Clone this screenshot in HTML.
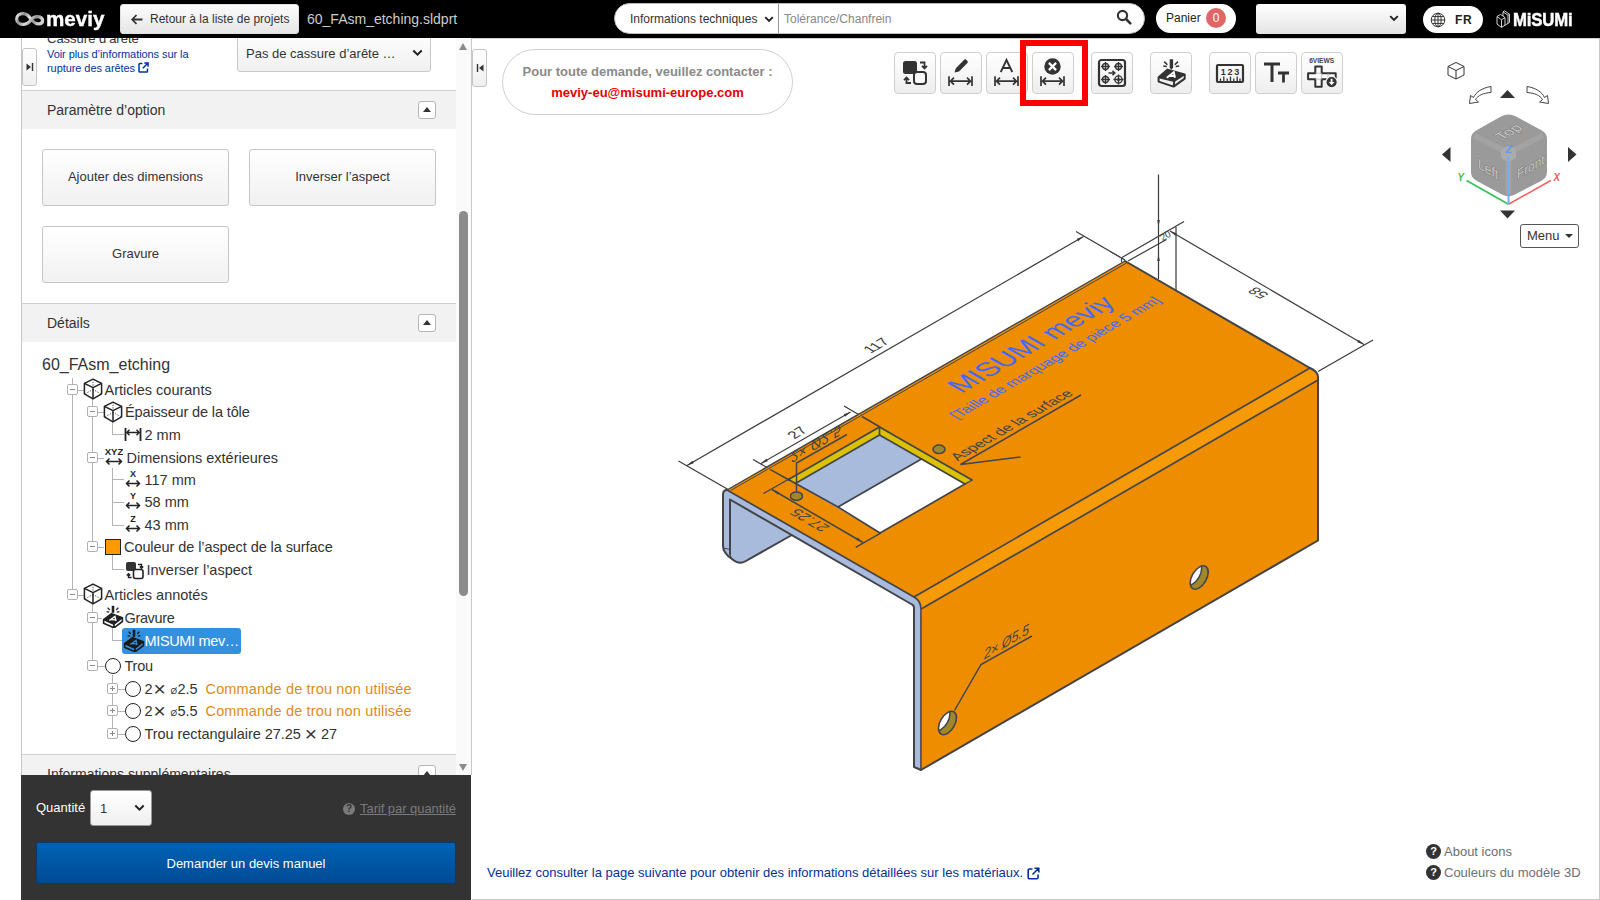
<!DOCTYPE html>
<html lang="fr">
<head>
<meta charset="utf-8">
<title>meviy</title>
<style>
*{box-sizing:border-box;margin:0;padding:0}
html,body{width:1600px;height:900px;overflow:hidden;background:#fff;font-family:"Liberation Sans",sans-serif;color:#333}
.abs{position:absolute}
#hdr{position:absolute;left:0;top:0;width:1600px;height:38px;background:#000}
.btn{position:absolute;border:1px solid #c4c4c4;border-radius:3px;background:linear-gradient(#ffffff,#efefef);color:#333;text-align:center}
#lp{position:absolute;left:21px;top:38px;width:451px;height:737px;border-left:1px solid #c8c8c8;border-right:1px solid #c8c8c8;background:#fff;overflow:hidden}
.sech{position:absolute;left:0;width:434px;height:39px;background:#f2f2f2;border-top:1px solid #d0d0d0;font-size:14px;color:#333}
.sech span{position:absolute;left:25px;top:11px}
.colb{position:absolute;left:396px;width:18px;height:18px;border:1px solid #b5b5b5;border-radius:3px;background:#fff}
.colb:after{content:"";position:absolute;left:4px;top:5px;border-left:4px solid transparent;border-right:4px solid transparent;border-bottom:5px solid #333}
.tree{font-size:15.5px;color:#333;white-space:nowrap;letter-spacing:-0.1px}
.tree div{position:absolute;height:20px;line-height:20px}
#bot{position:absolute;left:21px;top:775px;width:450px;height:125px;background:#333}
#vw{position:absolute;left:472px;top:38px;width:1128px;height:862px;border-right:1px solid #c8c8c8;border-bottom:1px solid #c8c8c8;background:#fff}
.tb{position:absolute;top:52px;width:42px;height:42px;border:1px solid #cfcfcf;border-radius:4px;background:linear-gradient(#ffffff,#eeeeee)}
</style>
</head>
<body>
<!-- HEADER -->
<div id="hdr">
<svg class="abs" style="left:14px;top:10px" width="32" height="18" viewBox="0 0 32 18"><defs><linearGradient id="lg1" x1="0" y1="0" x2="1" y2="0.300"><stop offset="0" stop-color="#f6f6f6"/><stop offset="0.280" stop-color="#8c8c8c"/><stop offset="0.550" stop-color="#dcdcdc"/><stop offset="0.800" stop-color="#909090"/><stop offset="1" stop-color="#cfcfcf"/></linearGradient></defs><path d="M17.500 10.200C15 5.500 12 3.600 9 3.600 5.300 3.600 2.700 6 2.700 9 2.700 12 5.300 14.300 9 14.300 12.500 14.300 15.300 12.300 17.300 9.700 19 7.500 21.200 6.400 23.800 6.600 26.800 6.900 28.600 8.600 28.600 10.600 28.600 12.600 27 13.900 24.600 13.900 22.300 13.900 20.600 12.900 19.300 11.500" fill="none" stroke="url(#lg1)" stroke-width="3.300" stroke-linecap="round"/></svg>
<div class="abs" style="left:46px;top:6px;font-size:20px;font-weight:bold;color:#fff;line-height:26px;transform-origin:0 0;transform:scaleX(1.030);-webkit-text-stroke:0.4px #fff">meviy</div>
<div class="btn" style="left:120px;top:4px;width:179px;height:30px;border-color:#e0e0e0;background:linear-gradient(#fcfcfc,#e6e6e6)">
<svg class="abs" style="left:10px;top:9px" width="12" height="11" viewBox="0 0 12 11"><path d="M5.500 1L1.200 5.500 5.500 10M1.500 5.500H11.500" fill="none" stroke="#333" stroke-width="1.800"/></svg>
<div class="abs" style="left:29px;top:7px;font-size:12px;line-height:14px;white-space:nowrap;color:#333">Retour à la liste de projets</div></div>
<div class="abs" style="left:307px;top:11px;font-size:14px;line-height:16px;color:#ccc;white-space:nowrap">60_FAsm_etching.sldprt</div>
<div class="abs" style="left:614px;top:3px;width:531px;height:31px;border-radius:16px;background:#fff;border:1px solid #bbb"></div>
<div class="abs" style="left:630px;top:12px;font-size:12px;line-height:14px;color:#333;white-space:nowrap">Informations techniques</div>
<svg class="abs" style="left:764px;top:16px" width="10" height="7" viewBox="0 0 10 7"><path d="M1.200 1.200L5 5 8.800 1.200" fill="none" stroke="#222" stroke-width="1.900"/></svg>
<div class="abs" style="left:778px;top:4px;width:1px;height:29px;background:#999"></div>
<div class="abs" style="left:784px;top:12px;font-size:12px;line-height:14px;color:#888;white-space:nowrap">Tolérance/Chanfrein</div>
<svg class="abs" style="left:1116px;top:9px" width="16" height="16" viewBox="0 0 16 16"><circle cx="6.500" cy="6.500" r="4.600" fill="none" stroke="#333" stroke-width="2.100"/><path d="M10 10l4.300 4.300" stroke="#333" stroke-width="2.600" stroke-linecap="round"/></svg>
<div class="abs" style="left:1156px;top:4px;width:80px;height:29px;border-radius:15px;background:#fff"></div>
<div class="abs" style="left:1166px;top:11px;font-size:12px;line-height:14px;color:#222">Panier</div>
<div class="abs" style="left:1206px;top:8px;width:20px;height:20px;border-radius:10px;background:#e06666;color:#fff;font-size:12px;line-height:20px;text-align:center">0</div>
<div class="abs" style="left:1256px;top:4px;width:150px;height:30px;border-radius:3px;background:linear-gradient(#ffffff,#e4e4e4)"></div>
<svg class="abs" style="left:1389px;top:15px" width="10" height="7" viewBox="0 0 10 7"><path d="M1.200 1.200L5 5 8.800 1.200" fill="none" stroke="#222" stroke-width="1.900"/></svg>
<div class="abs" style="left:1423px;top:6px;width:60px;height:27px;border-radius:14px;background:#fff"></div>
<svg class="abs" style="left:1430px;top:12px" width="16" height="16" viewBox="0 0 16 16"><g fill="none" stroke="#333" stroke-width="1"><circle cx="8" cy="8" r="6.800"/><ellipse cx="8" cy="8" rx="3.200" ry="6.800"/><path d="M8 1.200v13.600M1.200 8h13.600M2.200 4.600h11.600M2.200 11.400h11.600"/></g></svg>
<div class="abs" style="left:1455px;top:13px;font-size:12px;line-height:14px;font-weight:bold;color:#222;letter-spacing:0.6px">FR</div>
<svg class="abs" style="left:1496px;top:10px" width="16" height="19" viewBox="0 0 16 19"><g fill="none" stroke="#e8e8e8" stroke-width="0.900" stroke-linejoin="round"><path d="M1 6.500L5.500 9.800V17.400L1 14.100Z"/><path d="M5.500 9.800L9 7.600M5.500 17.400L13.500 12.400V4.300L8.500 0.800 7 1.800V6L4.500 4.400 1 6.500"/><path d="M7 1.800L12 5.300 13.500 4.300M12 5.300V13.300M9 7.600V15.200M7 6L9 7.600"/></g></svg>
<div class="abs" style="left:1513px;top:8px;font-size:18.500px;line-height:24px;font-weight:bold;color:#fff;transform-origin:0 0;transform:scaleX(0.905);white-space:nowrap;letter-spacing:-0.2px;-webkit-text-stroke:0.500px #fff">MiSUMi</div>
</div>
<!-- LEFT PANEL -->
<div id="lp">
<div class="abs" style="left:25px;top:-7px;font-size:13px;line-height:16px;color:#333;white-space:nowrap">Cassure d’arête</div>
<div class="abs" style="left:25px;top:9px;font-size:11px;line-height:14px;color:#003399;white-space:nowrap;letter-spacing:-0.070px">Voir plus d’informations sur la<br>rupture des arêtes</div>
<svg class="abs" style="left:116px;top:24px" width="11" height="11" viewBox="0 0 11 11"><path d="M4.500 1.500H1.800C1.200 1.500 1 1.800 1 2.300V9.200C1 9.700 1.300 10 1.800 10H8.700C9.200 10 9.500 9.700 9.500 9.200V6.500M6.300 0.900H10.100V4.700M10 1L4.800 6.200" fill="none" stroke="#0033a0" stroke-width="1.500"/></svg>
<div class="btn" style="left:0px;top:10px;width:15px;height:38px;border-radius:3px"><svg class="abs" style="left:3px;top:13px" width="8" height="10" viewBox="0 0 8 10"><path d="M0.500 1.500L5 5 0.500 8.500z" fill="#333"/><path d="M6.500 1v8" stroke="#333" stroke-width="1.400"/></svg></div>
<div class="btn" style="left:215px;top:-7px;width:194px;height:41px;background:linear-gradient(#fff,#f0f0f0);border-color:#c8c8c8"></div>
<div class="abs" style="left:224px;top:8px;font-size:13px;line-height:16px;color:#333;white-space:nowrap">Pas de cassure d’arête …</div>
<svg class="abs" style="left:390px;top:11px" width="11" height="8" viewBox="0 0 11 8"><path d="M1.300 1.500L5.500 5.700 9.700 1.500" fill="none" stroke="#222" stroke-width="2"/></svg>
<div class="sech" style="top:52px"><span>Paramètre d’option</span></div>
<div class="colb" style="top:63px"></div>
<div class="sech" style="top:265px"><span>Détails</span></div>
<div class="colb" style="top:276px"></div>
<div class="sech" style="top:716px"><span>Informations supplémentaires</span></div>
<div class="colb" style="top:727px"></div>
<div class="btn" style="left:20px;top:111px;width:187px;height:57px;font-size:13px;line-height:54px;border-color:#c6c6c6;background:linear-gradient(#ffffff,#f1f1f1)">Ajouter des dimensions</div>
<div class="btn" style="left:227px;top:111px;width:187px;height:57px;font-size:13px;line-height:54px;border-color:#c6c6c6;background:linear-gradient(#ffffff,#f1f1f1)">Inverser l’aspect</div>
<div class="btn" style="left:20px;top:188px;width:187px;height:57px;font-size:13px;line-height:54px;border-color:#c6c6c6;background:linear-gradient(#ffffff,#f1f1f1)">Gravure</div>
<div class="abs" style="left:20px;top:318px;font-size:16px;line-height:18px;color:#333;white-space:nowrap">60_FAsm_etching</div>
<div class="abs" style="left:50px;top:340px;width:1px;height:211px;background:#b4b4b4"></div>
<div class="abs" style="left:70px;top:361px;width:1px;height:142px;background:#b4b4b4"></div>
<div class="abs" style="left:70px;top:566px;width:1px;height:56px;background:#b4b4b4"></div>
<div class="abs" style="left:90px;top:383px;width:1px;height:14px;background:#b4b4b4"></div>
<div class="abs" style="left:90px;top:396px;width:12px;height:1px;background:#b4b4b4"></div>
<div class="abs" style="left:90px;top:430px;width:1px;height:58px;background:#b4b4b4"></div>
<div class="abs" style="left:90px;top:441px;width:12px;height:1px;background:#b4b4b4"></div>
<div class="abs" style="left:90px;top:464px;width:12px;height:1px;background:#b4b4b4"></div>
<div class="abs" style="left:90px;top:487px;width:12px;height:1px;background:#b4b4b4"></div>
<div class="abs" style="left:90px;top:517px;width:1px;height:15px;background:#b4b4b4"></div>
<div class="abs" style="left:90px;top:531px;width:12px;height:1px;background:#b4b4b4"></div>
<div class="abs" style="left:90px;top:590px;width:1px;height:13px;background:#b4b4b4"></div>
<div class="abs" style="left:90px;top:602px;width:10px;height:1px;background:#b4b4b4"></div>
<div class="abs" style="left:90px;top:637px;width:1px;height:59px;background:#b4b4b4"></div>
<div class="abs" style="left:56px;top:352px;width:6px;height:1px;background:#b4b4b4"></div>
<div class="abs" style="left:45px;top:346px;width:11px;height:11px;border:1px solid #b0b0b0;border-radius:2px;background:#fff"><i style="position:absolute;left:2px;top:4px;width:5px;height:1px;background:#8a8a8a"></i></div>
<svg class="abs" style="left:61px;top:340px" width="20" height="22" viewBox="0 0 20 22"><g fill="none" stroke="#222" stroke-width="1.500" stroke-linejoin="round"><path d="M10 1.200L18.600 5.400V15.800L10 20.800 1.400 15.800V5.400z"/><path d="M1.400 5.400L10 9.600 18.600 5.400M10 9.600V20.800"/></g><g fill="none" stroke="#222" stroke-width="1" stroke-dasharray="1 1.600"><path d="M10 1.200V11.500M10 11.500L2.500 15.500M10 11.500L17.500 15.500"/></g></svg>
<div class="abs" style="left:82.5px;top:342px;font-size:14.5px;line-height:20px;color:#333;white-space:nowrap;letter-spacing:0px">Articles courants</div>
<div class="abs" style="left:76px;top:374px;width:6px;height:1px;background:#b4b4b4"></div>
<div class="abs" style="left:65px;top:368px;width:11px;height:11px;border:1px solid #b0b0b0;border-radius:2px;background:#fff"><i style="position:absolute;left:2px;top:4px;width:5px;height:1px;background:#8a8a8a"></i></div>
<svg class="abs" style="left:81px;top:363px" width="20" height="22" viewBox="0 0 20 22"><g fill="none" stroke="#222" stroke-width="1.500" stroke-linejoin="round"><path d="M10 1.200L18.600 5.400V15.800L10 20.800 1.400 15.800V5.400z"/><path d="M1.400 5.400L10 9.600 18.600 5.400M10 9.600V20.800"/></g><g fill="none" stroke="#222" stroke-width="1" stroke-dasharray="1 1.600"><path d="M10 1.200V11.500M10 11.500L2.500 15.500M10 11.500L17.500 15.500"/></g></svg>
<div class="abs" style="left:103px;top:364px;font-size:14.5px;line-height:20px;color:#333;white-space:nowrap;letter-spacing:-0.14px">Épaisseur de la tôle</div>
<svg class="abs" style="left:102px;top:389px" width="18" height="15" viewBox="0 0 18 15"><path d="M1.500 1V14M16.500 1V14" stroke="#222" stroke-width="1.800" fill="none"/><path d="M2.500 5.500H15.500M5.500 2.800L2.800 5.500 5.500 8.200M12.500 2.800L15.200 5.500 12.500 8.200" fill="none" stroke="#222" stroke-width="1.400"/></svg>
<div class="abs" style="left:122.5px;top:387px;font-size:14.5px;line-height:20px;color:#333;white-space:nowrap;letter-spacing:0px">2 mm</div>
<div class="abs" style="left:76px;top:420px;width:6px;height:1px;background:#b4b4b4"></div>
<div class="abs" style="left:65px;top:414px;width:11px;height:11px;border:1px solid #b0b0b0;border-radius:2px;background:#fff"><i style="position:absolute;left:2px;top:4px;width:5px;height:1px;background:#8a8a8a"></i></div>
<svg class="abs" style="left:83px;top:408px" width="18" height="22" viewBox="0 0 18 22"><text x="9.0" y="8.500" font-family="Liberation Sans, sans-serif" font-size="9.5" font-weight="bold" text-anchor="middle" fill="#222">XYZ</text><path d="M1.500 15.500H16.5M4.500 12.500L1.500 15.500 4.500 18.500M13.5 12.500L16.5 15.500 13.5 18.500" fill="none" stroke="#222" stroke-width="1.500"/></svg>
<div class="abs" style="left:104.5px;top:410px;font-size:14.5px;line-height:20px;color:#333;white-space:nowrap;letter-spacing:0px">Dimensions extérieures</div>
<svg class="abs" style="left:103px;top:430px" width="16" height="22" viewBox="0 0 16 22"><text x="8.0" y="8.500" font-family="Liberation Sans, sans-serif" font-size="9" font-weight="bold" text-anchor="middle" fill="#222">X</text><path d="M1.500 15.500H14.5M4.500 12.500L1.500 15.500 4.500 18.500M11.5 12.500L14.5 15.500 11.5 18.500" fill="none" stroke="#222" stroke-width="1.500"/></svg>
<div class="abs" style="left:122.5px;top:432px;font-size:14.5px;line-height:20px;color:#333;white-space:nowrap;letter-spacing:0px">117 mm</div>
<svg class="abs" style="left:103px;top:452px" width="16" height="22" viewBox="0 0 16 22"><text x="8.0" y="8.500" font-family="Liberation Sans, sans-serif" font-size="9" font-weight="bold" text-anchor="middle" fill="#222">Y</text><path d="M1.500 15.500H14.5M4.500 12.500L1.500 15.500 4.500 18.500M11.5 12.500L14.5 15.500 11.5 18.500" fill="none" stroke="#222" stroke-width="1.500"/></svg>
<div class="abs" style="left:122.5px;top:454px;font-size:14.5px;line-height:20px;color:#333;white-space:nowrap;letter-spacing:0px">58 mm</div>
<svg class="abs" style="left:103px;top:475px" width="16" height="22" viewBox="0 0 16 22"><text x="8.0" y="8.500" font-family="Liberation Sans, sans-serif" font-size="9" font-weight="bold" text-anchor="middle" fill="#222">Z</text><path d="M1.500 15.500H14.5M4.500 12.500L1.500 15.500 4.500 18.500M11.5 12.500L14.5 15.500 11.5 18.500" fill="none" stroke="#222" stroke-width="1.500"/></svg>
<div class="abs" style="left:122.5px;top:477px;font-size:14.5px;line-height:20px;color:#333;white-space:nowrap;letter-spacing:0px">43 mm</div>
<div class="abs" style="left:76px;top:509px;width:6px;height:1px;background:#b4b4b4"></div>
<div class="abs" style="left:65px;top:503px;width:11px;height:11px;border:1px solid #b0b0b0;border-radius:2px;background:#fff"><i style="position:absolute;left:2px;top:4px;width:5px;height:1px;background:#8a8a8a"></i></div>
<div class="abs" style="left:83px;top:501px;width:16px;height:16px;background:#ff9900;border:1.500px solid #222"></div>
<div class="abs" style="left:102px;top:499px;font-size:14.5px;line-height:20px;color:#333;white-space:nowrap;letter-spacing:-0.075px">Couleur de l’aspect de la surface</div>
<svg class="abs" style="left:103px;top:523px" width="20" height="19" viewBox="0 0 20 19"><rect x="1" y="1" width="10" height="9" rx="2" fill="#333"/><rect x="8.500" y="8.500" width="9.500" height="9" rx="2" fill="#fff" stroke="#222" stroke-width="1.600"/><path d="M13 3.500h3.500v3.500M14.800 5.500l1.700 1.800 1.700-1.800M6.500 16.500H3.500V13M1.800 14.600l1.700-1.800 1.700 1.800" fill="none" stroke="#222" stroke-width="1.400"/></svg>
<div class="abs" style="left:124.5px;top:522px;font-size:14.5px;line-height:20px;color:#333;white-space:nowrap;letter-spacing:0px">Inverser l’aspect</div>
<div class="abs" style="left:56px;top:557px;width:6px;height:1px;background:#b4b4b4"></div>
<div class="abs" style="left:45px;top:551px;width:11px;height:11px;border:1px solid #b0b0b0;border-radius:2px;background:#fff"><i style="position:absolute;left:2px;top:4px;width:5px;height:1px;background:#8a8a8a"></i></div>
<svg class="abs" style="left:61px;top:545px" width="20" height="22" viewBox="0 0 20 22"><g fill="none" stroke="#222" stroke-width="1.500" stroke-linejoin="round"><path d="M10 1.200L18.600 5.400V15.800L10 20.800 1.400 15.800V5.400z"/><path d="M1.400 5.400L10 9.600 18.600 5.400M10 9.600V20.800"/></g><g fill="none" stroke="#222" stroke-width="1" stroke-dasharray="1 1.600"><path d="M10 1.200V11.500M10 11.500L2.500 15.500M10 11.500L17.500 15.500"/></g></svg>
<div class="abs" style="left:82.5px;top:547px;font-size:14.5px;line-height:20px;color:#333;white-space:nowrap;letter-spacing:0px">Articles annotés</div>
<div class="abs" style="left:76px;top:580px;width:4px;height:1px;background:#b4b4b4"></div>
<div class="abs" style="left:65px;top:574px;width:11px;height:11px;border:1px solid #b0b0b0;border-radius:2px;background:#fff"><i style="position:absolute;left:2px;top:4px;width:5px;height:1px;background:#8a8a8a"></i></div>
<svg class="abs" style="left:80px;top:567px" width="22" height="23" viewBox="0 0 22 23"><g fill="none" stroke="#222" stroke-linejoin="round" stroke-linecap="butt"><path d="M11 0.800v7" stroke-width="2.600"/><path d="M5.600 2.600l2.200 2.400M16.400 2.600l-2.200 2.400M4.600 6.600l2.600.600M17.400 6.600l-2.600.600" stroke-width="1.300"/></g><path d="M1.600 14.600L9.500 8.600 20.400 12.600 12 19.200z" fill="#222" stroke="#222" stroke-width="1.500" stroke-linejoin="round"/><path d="M1.600 14.600V18.200L12 22.800 20.400 16.500V12.600M12 19.200V22.800" fill="none" stroke="#222" stroke-width="1.600" stroke-linejoin="round"/><path d="M7.300 15.600l5.700-4.200 1 4.600M9.200 14.500l4.300.300" fill="none" stroke="#fff" stroke-width="1.300"/></svg>
<div class="abs" style="left:102.5px;top:570px;font-size:14.5px;line-height:20px;color:#333;white-space:nowrap;letter-spacing:-0.35px">Gravure</div>
<div class="abs" style="left:100px;top:590px;width:119px;height:26px;background:#3390e0;border-radius:3px"></div>
<svg class="abs" style="left:101px;top:591px" width="22" height="23" viewBox="0 0 22 23"><g fill="none" stroke="#1a1a1a" stroke-linejoin="round" stroke-linecap="butt"><path d="M11 0.800v7" stroke-width="2.600"/><path d="M5.600 2.600l2.200 2.400M16.400 2.600l-2.200 2.400M4.600 6.600l2.600.600M17.400 6.600l-2.600.600" stroke-width="1.300"/></g><path d="M1.600 14.600L9.500 8.600 20.400 12.600 12 19.200z" fill="#1a1a1a" stroke="#1a1a1a" stroke-width="1.500" stroke-linejoin="round"/><path d="M1.600 14.600V18.200L12 22.800 20.400 16.500V12.600M12 19.200V22.800" fill="none" stroke="#1a1a1a" stroke-width="1.600" stroke-linejoin="round"/><path d="M7.300 15.600l5.700-4.200 1 4.600M9.200 14.500l4.300.300" fill="none" stroke="#3390e0" stroke-width="1.300"/></svg>
<div class="abs" style="left:122.5px;top:593px;font-size:14.5px;line-height:20px;color:#fff;white-space:nowrap;letter-spacing:-0.35px">MISUMI mev…</div>
<div class="abs" style="left:76px;top:628px;width:7px;height:1px;background:#b4b4b4"></div>
<div class="abs" style="left:65px;top:622px;width:11px;height:11px;border:1px solid #b0b0b0;border-radius:2px;background:#fff"><i style="position:absolute;left:2px;top:4px;width:5px;height:1px;background:#8a8a8a"></i></div>
<div class="abs" style="left:83px;top:620px;width:16px;height:16px;border:1.800px solid #222;border-radius:50%"></div>
<div class="abs" style="left:102.5px;top:618px;font-size:14.5px;line-height:20px;color:#333;white-space:nowrap;letter-spacing:-0.2px">Trou</div>
<div class="abs" style="left:96px;top:651px;width:7px;height:1px;background:#b4b4b4"></div>
<div class="abs" style="left:85px;top:645px;width:11px;height:11px;border:1px solid #b0b0b0;border-radius:2px;background:#fff"><i style="position:absolute;left:2px;top:4px;width:5px;height:1px;background:#8a8a8a"></i><i style="position:absolute;left:4px;top:2px;width:1px;height:5px;background:#8a8a8a"></i></div>
<div class="abs" style="left:103px;top:643px;width:16px;height:16px;border:1.800px solid #222;border-radius:50%"></div>
<div class="abs" style="left:122.5px;top:641px;font-size:14.500px;line-height:20px;color:#333;white-space:nowrap;letter-spacing:-0.100px">2<span style="font-size:21px;line-height:0;position:relative;top:1.500px;margin:0 1px 0 1px">×</span> <span style="font-size:8.500px;line-height:0;margin-right:0.500px">Ø</span>2.5</div>
<div class="abs" style="left:183.5px;top:641px;font-size:14.5px;line-height:20px;color:#e08a1e;white-space:nowrap;letter-spacing:0.16px">Commande de trou non utilisée</div>
<div class="abs" style="left:96px;top:673px;width:7px;height:1px;background:#b4b4b4"></div>
<div class="abs" style="left:85px;top:667px;width:11px;height:11px;border:1px solid #b0b0b0;border-radius:2px;background:#fff"><i style="position:absolute;left:2px;top:4px;width:5px;height:1px;background:#8a8a8a"></i><i style="position:absolute;left:4px;top:2px;width:1px;height:5px;background:#8a8a8a"></i></div>
<div class="abs" style="left:103px;top:665px;width:16px;height:16px;border:1.800px solid #222;border-radius:50%"></div>
<div class="abs" style="left:122.5px;top:663px;font-size:14.500px;line-height:20px;color:#333;white-space:nowrap;letter-spacing:-0.100px">2<span style="font-size:21px;line-height:0;position:relative;top:1.500px;margin:0 1px 0 1px">×</span> <span style="font-size:8.500px;line-height:0;margin-right:0.500px">Ø</span>5.5</div>
<div class="abs" style="left:183.5px;top:663px;font-size:14.5px;line-height:20px;color:#e08a1e;white-space:nowrap;letter-spacing:0.16px">Commande de trou non utilisée</div>
<div class="abs" style="left:96px;top:696px;width:7px;height:1px;background:#b4b4b4"></div>
<div class="abs" style="left:85px;top:690px;width:11px;height:11px;border:1px solid #b0b0b0;border-radius:2px;background:#fff"><i style="position:absolute;left:2px;top:4px;width:5px;height:1px;background:#8a8a8a"></i><i style="position:absolute;left:4px;top:2px;width:1px;height:5px;background:#8a8a8a"></i></div>
<div class="abs" style="left:103px;top:688px;width:16px;height:16px;border:1.800px solid #222;border-radius:50%"></div>
<div class="abs" style="left:122.5px;top:686px;font-size:14.500px;line-height:20px;color:#333;white-space:nowrap;letter-spacing:-0.050px">Trou rectangulaire 27.25 <span style="font-size:21px;line-height:0;position:relative;top:1.500px">×</span> 27</div>
<div class="abs" style="left:434px;top:0;width:15px;height:737px;background:#fafafa"></div>
<div class="abs" style="left:437px;top:5px;border-left:4.500px solid transparent;border-right:4.500px solid transparent;border-bottom:7px solid #8c8c8c"></div>
<div class="abs" style="left:437px;top:726px;border-left:4.500px solid transparent;border-right:4.500px solid transparent;border-top:7px solid #8c8c8c"></div>
<div class="abs" style="left:437px;top:173px;width:9px;height:385px;background:#8c8c8c;border-radius:5px"></div>
</div><!--E:lp-->
<div id="bot">
<div class="abs" style="left:15px;top:25px;font-size:13px;line-height:16px;color:#fff;white-space:nowrap">Quantité</div>
<div class="abs" style="left:69px;top:15px;width:62px;height:36px;border-radius:3px;border:1px solid #999;background:linear-gradient(#fff,#f0f0f0)"><div class="abs" style="left:9px;top:10px;font-size:13px;line-height:16px;color:#333">1</div><svg class="abs" style="left:43px;top:13px" width="11" height="8" viewBox="0 0 11 8"><path d="M1.300 1.500L5.500 5.700 9.700 1.500" fill="none" stroke="#222" stroke-width="2"/></svg></div>
<div class="abs" style="left:322px;top:28px;width:12px;height:12px;border-radius:6px;background:#7a7a7a;color:#333;font-size:10px;font-weight:bold;line-height:12px;text-align:center">?</div>
<div class="abs" style="left:339px;top:26px;font-size:13px;line-height:16px;color:#7a7a7a;white-space:nowrap;text-decoration:underline;letter-spacing:-0.050px">Tarif par quantité</div>
<div class="abs" style="left:15px;top:67px;width:420px;height:42px;border:1px solid #003c7a;border-radius:2px;background:linear-gradient(#0062b4,#004a94);color:#fff;font-size:13px;line-height:41px;text-align:center">Demander un devis manuel</div>
</div><!--E:bot-->
<!-- VIEWER -->
<div id="vw">
<svg class="abs" style="left:0;top:0" width="1126" height="860" viewBox="472 38 1126 860" font-family="Liberation Sans, sans-serif">
<line x1="687" y1="465.5" x2="1083.5" y2="236.5" stroke="#3a3a3a" stroke-width="1.2" />
<line x1="678.5" y1="461" x2="729" y2="490" stroke="#3a3a3a" stroke-width="1.2" />
<line x1="1076" y1="231.5" x2="1125" y2="260" stroke="#3a3a3a" stroke-width="1.2" />
<line x1="761" y1="463.5" x2="850.5" y2="412" stroke="#3a3a3a" stroke-width="1.2" />
<line x1="753" y1="459.5" x2="790" y2="480.5" stroke="#3a3a3a" stroke-width="1.2" />
<line x1="844" y1="406" x2="880" y2="427" stroke="#3a3a3a" stroke-width="1.2" />
<line x1="1170" y1="231" x2="1364" y2="344.5" stroke="#3a3a3a" stroke-width="1.2" />
<line x1="1122" y1="257.5" x2="1184" y2="221.5" stroke="#3a3a3a" stroke-width="1.2" />
<line x1="1318" y1="371.5" x2="1373" y2="340" stroke="#3a3a3a" stroke-width="1.2" />
<line x1="1128" y1="261" x2="1166.5" y2="239.5" stroke="#3a3a3a" stroke-width="1.2" />
<line x1="1158.5" y1="174.5" x2="1158.5" y2="279" stroke="#3a3a3a" stroke-width="1.2" />
<line x1="1176" y1="227" x2="1176" y2="290" stroke="#3a3a3a" stroke-width="1.2" />
<path d="M723 494.500Q723 490 727 490L914 597Q921 601 921 609V770L914 767V607.500Q914 605.500 912 604.500L791 535.500 745 561.500Q739 565 732 559Q723 553 723 546Z" fill="#a8bbdc"/>
<path d="M727 490L1125 261L1310 368L914 597Z" fill="#ee8d00"/>
<path d="M914 597L1310 368Q1318 371.500 1318 377V380L922 608.500Q921 601 914 597Z" fill="#f69a08"/>
<path d="M922 608.500L1318 380V540.500L922 769.500Z" fill="#ee8d00"/>
<path d="M788.500 479.500L879.500 427L972 480L880 533Z" fill="#a8bbdc"/>
<path d="M838 507L921.500 459L964.900 484.100L880 533Z" fill="#fff"/>
<path d="M788.500 479.500L879.500 427V435L795.400 483.500Z" fill="#dcc100"/>
<path d="M879.500 427L972 480L964.900 484.100L879.500 435Z" fill="#dcc100"/>
<g fill="none" stroke="#41454c" stroke-width="1.7" stroke-linejoin="round" stroke-linecap="round">
<path d="M727 490L914 597Q921 601 921 609V770"/>
<path d="M914 597L1310 368"/>
<path d="M922 608.500L1318 380"/>
<path d="M731 490.300L1126.500 263" stroke-width="1"/>
<path d="M788.500 479.500L879.500 427L972 480"/>
<path d="M795.400 483.500L879.500 435L921.500 459"/>
<path d="M879.500 427V435"/>
<path d="M788.500 479.500L838 507"/>
<path d="M730 554Q730.500 560 738 562.500" stroke-width="1.100"/>
<path d="M723.500 548L730 549.500" stroke-width="1"/>
</g>
<g fill="none" stroke="#424346" stroke-width="2.0" stroke-linejoin="round" stroke-linecap="round">
<path d="M727 490Q723 490 723 494.500V546Q723 553 732 559Q739 565 745 561.500L791 535.500"/>
<path d="M730 554V499.500L912 604.500Q914 605.500 914 607.500V767L921 770L1318 540.500V377Q1318 371.500 1310 368L1125 261" />
<path d="M727 490L1125 261" stroke-width="1.400"/>
<path d="M838 507L880 533L964.900 484.100L921.500 459Z" stroke-width="1.700"/>
<path d="M964.900 484.100L972 480" stroke-width="1.300"/>
</g>
<line x1="1121.5" y1="258" x2="1121.5" y2="262" stroke="#41454c" stroke-width="1.2" />
<ellipse cx="796.5" cy="496.2" rx="6" ry="4.200" fill="#a0872a" stroke="#41454c" stroke-width="1.500"/>
<ellipse cx="939" cy="449.3" rx="6" ry="4.200" fill="#a0872a" stroke="#41454c" stroke-width="1.500"/>
<clipPath id="hc0"><ellipse cx="947.5" cy="723" rx="12.800" ry="7.300" transform="rotate(-60 947.5 723)"/></clipPath>
<ellipse cx="947.5" cy="723" rx="12.800" ry="7.300" transform="rotate(-60 947.5 723)" fill="#a0872a"/>
<g clip-path="url(#hc0)"><ellipse cx="940.9" cy="719.2" rx="12.800" ry="7.300" transform="rotate(-60 940.9 719.2)" fill="#fff" stroke="#41454c" stroke-width="1.500"/></g>
<ellipse cx="947.5" cy="723" rx="12.800" ry="7.300" transform="rotate(-60 947.5 723)" fill="none" stroke="#41454c" stroke-width="1.600"/>
<clipPath id="hc1"><ellipse cx="1199.2" cy="577.5" rx="12.800" ry="7.300" transform="rotate(-60 1199.2 577.5)"/></clipPath>
<ellipse cx="1199.2" cy="577.5" rx="12.800" ry="7.300" transform="rotate(-60 1199.2 577.5)" fill="#a0872a"/>
<g clip-path="url(#hc1)"><ellipse cx="1192.6000000000001" cy="573.7" rx="12.800" ry="7.300" transform="rotate(-60 1192.6000000000001 573.7)" fill="#fff" stroke="#41454c" stroke-width="1.500"/></g>
<ellipse cx="1199.2" cy="577.5" rx="12.800" ry="7.300" transform="rotate(-60 1199.2 577.5)" fill="none" stroke="#41454c" stroke-width="1.600"/>
<line x1="770" y1="469.3" x2="790" y2="480.5" stroke="#41454c" stroke-width="1.5" />
<line x1="862" y1="416.5" x2="880" y2="427" stroke="#41454c" stroke-width="1.5" />
<line x1="1110" y1="251.5" x2="1125" y2="260" stroke="#41454c" stroke-width="1" />
<line x1="772" y1="489.5" x2="863" y2="542.5" stroke="#41454c" stroke-width="1.5" />
<line x1="763.5" y1="493.5" x2="789" y2="479" stroke="#41454c" stroke-width="1.4" />
<line x1="855.7" y1="547.3" x2="881" y2="532.8" stroke="#41454c" stroke-width="1.4" />
<path d="M772 489.500l6.800 2.600-1.300 2.300z M863 542.500l-6.800-2.600 1.300-2.300z" fill="#41454c"/>
<path d="M796.500 492V463L847 434.500" fill="none" stroke="#41454c" stroke-width="1.500"/>
<path d="M954.500 710.500L981 664.500L1032 636" fill="none" stroke="#41454c" stroke-width="1.500"/>
<path d="M1081 395L960.500 464.500L1020.500 457" fill="none" stroke="#41454c" stroke-width="1.500"/>
<path d="M0 0L7 -1.300L7 1.300Z" fill="#3a3a3a" transform="translate(687 465.5) rotate(-30)"/>
<path d="M0 0L7 -1.300L7 1.300Z" fill="#3a3a3a" transform="translate(1083.5 236.5) rotate(150)"/>
<path d="M0 0L7 -1.300L7 1.300Z" fill="#3a3a3a" transform="translate(761 463.5) rotate(-30)"/>
<path d="M0 0L7 -1.300L7 1.300Z" fill="#3a3a3a" transform="translate(850.5 412) rotate(150)"/>
<path d="M0 0L7 -1.300L7 1.300Z" fill="#3a3a3a" transform="translate(1170 231) rotate(30)"/>
<path d="M0 0L7 -1.300L7 1.300Z" fill="#3a3a3a" transform="translate(1364 344.5) rotate(210)"/>
<path d="M0 0L7 -1.300L7 1.300Z" fill="#3a3a3a" transform="translate(1158.5 227) rotate(-90)"/>
<path d="M0 0L7 -1.300L7 1.300Z" fill="#3a3a3a" transform="translate(1158.5 254) rotate(90)"/>
<text transform="matrix(0.8660 -0.5000 0.8660 0.5000 880.5 348.1)" font-size="14.5" fill="#3a3a3a" text-anchor="middle" >117</text>
<text transform="matrix(0.8660 -0.5000 0.8660 0.5000 801.5 435.1)" font-size="14.5" fill="#3a3a3a" text-anchor="middle" >27</text>
<text transform="matrix(-0.8660 -0.5000 0.8660 -0.5000 1262.5 290.4)" font-size="14.5" fill="#3a3a3a" text-anchor="middle" >58</text>
<text transform="matrix(-0.8660 -0.5000 0.8660 -0.5000 814.2 517.6)" font-size="15.2" fill="#41454c" text-anchor="middle" >27.25</text>
<text transform="translate(1167 238.500) rotate(-30)" font-size="9.500" fill="#3a3a3a" text-anchor="middle">20</text>
<text transform="matrix(0.8660 -0.5000 0 -1 791 453.3)" font-size="15" fill="#41454c" text-anchor="start" letter-spacing="0.600">2× Ø2.5</text>
<text transform="matrix(0.8660 -0.5000 0.8660 0.5000 961.5 393.8)" font-size="27.6" fill="#4169ff" text-anchor="start" >MISUMI meviy</text>
<text transform="matrix(0.8660 -0.5000 0.8660 0.5000 957 419.6)" font-size="14.95" fill="#4169ff" text-anchor="start" >[Taille de marquage de pièce 5 mm]</text>
<text transform="matrix(0.8660 -0.5000 0.8660 0.5000 957.8 461.2)" font-size="14.85" fill="#41454c" text-anchor="start" >Aspect de la surface</text>
<text transform="matrix(0.8660 -0.5000 0 1 984 659.5)" font-size="14.5" fill="#41454c" text-anchor="start" font-style="italic">2× Ø5.5</text>
</svg><div class="abs" style="left:0;top:0;width:1128px;height:1px;background:#cfcfcf"></div>
<div class="btn" style="left:0px;top:11px;width:15px;height:38px;border-color:#c4c4c4"><svg class="abs" style="left:3px;top:13px" width="8" height="10" viewBox="0 0 8 10"><path d="M7.500 1.500L3 5 7.500 8.500z" fill="#333"/><path d="M1.500 1v8" stroke="#333" stroke-width="1.400"/></svg></div>
<div class="abs" style="left:30px;top:11px;width:291px;height:66px;border:1px solid #d0d0d0;border-radius:33px;text-align:center;font-weight:bold;font-size:13px;line-height:21px;padding-top:11px;color:#8a8a8a;white-space:nowrap">Pour toute demande, veuillez contacter :<br><span style="color:#e60000">meviy-eu@misumi-europe.com</span></div>
<div class="tb" style="left:422px;top:14px"><svg class="abs" style="left:-1px;top:-1px" width="42" height="42" viewBox="0 0 42 42"><rect x="9" y="9" width="14" height="13" rx="2.500" fill="#333"/><rect x="20" y="20" width="12" height="12" rx="3" fill="#f8f8f8" stroke="#333" stroke-width="2"/><path d="M26 10.500h4.500v5.500M28 13.800l2.500 2.700 2.500-2.700M17 31h-4.500v-5M10 28.200l2.500-2.700 2.500 2.700" fill="none" stroke="#333" stroke-width="1.800"/></svg></div>
<div class="tb" style="left:468px;top:14px"><svg class="abs" style="left:-1px;top:-1px" width="42" height="42" viewBox="0 0 42 42"><path d="M14.500 20.500l1.300-4.300 8.400-8.400c.600-.600 1.400-.600 2 0l1.200 1.200c.600.600.600 1.400 0 2l-8.400 8.400z" fill="#333"/><path d="M9 24.300v9.800M32 24.300v9.800M10.500 29.200h20M14 25.700l-3.500 3.500 3.500 3.500M27 25.700l3.500 3.500-3.500 3.500" fill="none" stroke="#333" stroke-width="1.700" stroke-linecap="butt"/></svg></div>
<div class="tb" style="left:514px;top:14px"><svg class="abs" style="left:-1px;top:-1px" width="42" height="42" viewBox="0 0 42 42"><path d="M14.700 20.200L20.500 8 26.300 20.200M16.600 16h7.800" fill="none" stroke="#333" stroke-width="1.900"/><path d="M9 24.300v9.800M32 24.300v9.800M10.500 29.200h20M14 25.700l-3.500 3.500 3.500 3.500M27 25.700l3.500 3.500-3.500 3.500" fill="none" stroke="#333" stroke-width="1.700" stroke-linecap="butt"/></svg></div>
<div class="tb" style="left:560px;top:14px"><svg class="abs" style="left:-1px;top:-1px" width="42" height="42" viewBox="0 0 42 42"><circle cx="20.500" cy="14.500" r="8.200" fill="#333"/><path d="M16.900 10.900l7.200 7.200M24.100 10.900l-7.200 7.200" stroke="#fff" stroke-width="2.200" fill="none"/><path d="M9 24.300v9.800M32 24.300v9.800M10.500 29.200h20M14 25.700l-3.500 3.500 3.500 3.500M27 25.700l3.500 3.500-3.500 3.500" fill="none" stroke="#333" stroke-width="1.700" stroke-linecap="butt"/></svg></div>
<div class="tb" style="left:619px;top:14px"><svg class="abs" style="left:-1px;top:-1px" width="42" height="42" viewBox="0 0 42 42"><rect x="8" y="8" width="26" height="26" rx="2.500" fill="none" stroke="#333" stroke-width="2.200"/><g fill="none" stroke="#333" stroke-width="1.300"><circle cx="14.500" cy="14.500" r="3"/><circle cx="27.500" cy="14.500" r="3"/><circle cx="14.500" cy="27.500" r="3"/><circle cx="27.500" cy="27.500" r="3.600"/><path d="M14.500 10v9M10 14.500h9M27.500 10v9M23 14.500h9M14.500 23v9M10 27.500h9M27.500 22.500v10M22.500 27.500h10"/></g><circle cx="27.500" cy="27.500" r="1.600" fill="#333"/><path d="M17.500 21h6M21.500 18.700l2.300 2.300-2.300 2.300" fill="none" stroke="#333" stroke-width="1.600"/></svg></div>
<div class="tb" style="left:678px;top:14px"><svg class="abs" style="left:-1px;top:-1px" width="42" height="42" viewBox="0 0 42 42"><path d="M19.700 7.200h3.400v8.300l-1.700 2.300-1.700-2.300z" fill="#333"/><path d="M14.200 9.600l3.200 3.200M28 9.600l-3.200 3.200M13.300 14l3.500.500M29.200 14l-3.500.500" stroke="#333" stroke-width="1.500" fill="none"/><path d="M8.600 25.300L17.500 17.500 34.700 22.300 24.300 29z" fill="#333" stroke="#333" stroke-width="1.800" stroke-linejoin="round"/><path d="M8.600 25.300V29.600L23.600 34.600 34.700 26.600V22.300M24.300 29L23.600 34.600" fill="none" stroke="#333" stroke-width="2" stroke-linejoin="round"/><path d="M16.800 25.800l7-5.600 1.200 5.600M19.600 24l5-.300" fill="none" stroke="#fff" stroke-width="1.900"/></svg></div>
<div class="tb" style="left:737px;top:14px"><svg class="abs" style="left:-1px;top:-1px" width="42" height="42" viewBox="0 0 42 42"><rect x="8" y="13" width="26" height="17" rx="1" fill="none" stroke="#333" stroke-width="2.200"/><path d="M11.500 29v-2.500M14.800 29v-4.500M18.200 29v-2.500M21.500 29v-4.500M24.800 29v-2.500M28.200 29v-4.500M31 29v-2.500" stroke="#333" stroke-width="1.300"/><text x="21.800" y="22.500" font-family="Liberation Sans, sans-serif" font-size="9" font-weight="bold" fill="#333" text-anchor="middle" letter-spacing="1.700">123</text></svg></div>
<div class="tb" style="left:783px;top:14px"><svg class="abs" style="left:-1px;top:-1px" width="42" height="42" viewBox="0 0 42 42"><path d="M9 12h16M17 12v18" stroke="#333" stroke-width="3" fill="none"/><path d="M23 21h11M28.500 21v9.500" stroke="#333" stroke-width="2.800" fill="none"/></svg></div>
<div class="tb" style="left:829px;top:14px"><svg class="abs" style="left:-1px;top:-1px" width="42" height="42" viewBox="0 0 42 42"><text x="20.700" y="11" font-family="Liberation Sans, sans-serif" font-size="6.800" font-weight="bold" fill="#444" text-anchor="middle" textLength="25" lengthAdjust="spacingAndGlyphs">6VIEWS</text><path d="M14.300 14.500h6.400v6.700h14v6h-14v7.500h-6.400v-7.500h-7.200v-6h7.200z" fill="#fdfdfd" stroke="#333" stroke-width="2" stroke-linejoin="round"/><path d="M14.300 21.200h6.400M14.300 27.200h6.400M20.700 21.200v6M27 21.200v6" stroke="#aaa" stroke-width="0.700"/><circle cx="30.600" cy="30.200" r="5.700" fill="#333" stroke="#f6f6f6" stroke-width="1.200"/><path d="M30.600 26.800v3.500" stroke="#fff" stroke-width="1.900" fill="none"/><path d="M27.700 29.900h5.800l-2.900 3.400z" fill="#fff"/></svg></div>
<div class="abs" style="left:548px;top:2px;width:68px;height:66px;border:6px solid #ff0000"></div>
<div class="abs" style="left:15px;top:827px;font-size:13px;line-height:16px;color:#003399;white-space:nowrap">Veuillez consulter la page suivante pour obtenir des informations détaillées sur les matériaux.</div>
<svg class="abs" style="left:555px;top:829px" width="13" height="13" viewBox="0 0 13 13"><path d="M5.500 2H2.200C1.500 2 1.200 2.300 1.200 3V10.800C1.200 11.500 1.500 11.800 2.200 11.800H10C10.700 11.800 11 11.500 11 10.800V7.500M7.500 1.200H11.800V5.500M11.700 1.300L5.500 7.500" fill="none" stroke="#003399" stroke-width="1.600"/></svg>
<div class="abs" style="left:954px;top:806px;width:15px;height:15px;border-radius:8px;background:#333;color:#fff;font-size:11px;font-weight:bold;line-height:15px;text-align:center">?</div>
<div class="abs" style="left:972px;top:806px;font-size:13px;line-height:16px;color:#6e6e6e;white-space:nowrap">About icons</div>
<div class="abs" style="left:954px;top:827px;width:15px;height:15px;border-radius:8px;background:#333;color:#fff;font-size:11px;font-weight:bold;line-height:15px;text-align:center">?</div>
<div class="abs" style="left:972px;top:827px;font-size:13px;line-height:16px;color:#6e6e6e;white-space:nowrap">Couleurs du modèle 3D</div><svg class="abs" style="left:958px;top:12px" width="160" height="180" viewBox="1430 50 160 180" font-family="Liberation Sans, sans-serif">
<defs><filter id="bl" x="-20%" y="-20%" width="140%" height="140%"><feGaussianBlur stdDeviation="0.6"/></filter></defs>
<g fill="none" stroke="#333" stroke-width="1" stroke-linejoin="round"><path d="M1456 62.500L1464 66.500V75L1456 79 1448 75V66.500Z"/><path d="M1448 66.500L1456 70.500 1464 66.500M1456 70.500V79"/></g>
<g fill="#fff" stroke="#444" stroke-width="1" stroke-linejoin="round"><path d="M1491 86.500C1482 88 1476 92 1473.500 97.500L1470.500 95.500 1469.500 103.500 1478.500 102 1475.500 99.500C1478 95.500 1483 93 1491 92.500Z"/><path d="M1527 86.500C1536 88 1542 92 1544.500 97.500L1547.500 95.500 1548.500 103.500 1539.500 102 1542.500 99.500C1540 95.500 1535 93 1527 92.500Z"/></g>
<g fill="#333"><path d="M1500 98L1507.500 90 1515 98Z"/><path d="M1500 210.500L1507.500 218.500 1515 210.500Z"/><path d="M1450.500 147L1442 154.500 1450.500 162Z"/><path d="M1568 147L1576.500 154.500 1568 162Z"/></g>
<g filter="url(#bl)">
<path d="M1508.500 114.500Q1512 114.500 1516 116.500L1541 130Q1547 133 1547 139V172Q1547 178 1541 181L1515 194.500Q1508.500 198 1502 194.500L1477 181Q1471 178 1471 172V139Q1471 133 1477 130L1501 116.500Q1505 114.500 1508.500 114.500Z" fill="#9a9a9a"/>
<path d="M1508.500 153L1474 135.500M1508.500 153L1543 135.500M1508.500 153V195" stroke="#a3a3a3" stroke-width="5.500" fill="none"/>
<path d="M1508.500 145.500L1516 149.500V158L1508.500 162.500 1501 158V149.500Z" fill="#ababab"/>
</g>
<text transform="matrix(0.866 -0.5 0.866 0.5 1502.500 140.500)" font-size="15" fill="none" stroke="#7c7c7c" stroke-width="1.300" opacity="0.9">Top</text>
<text transform="matrix(0.866 -0.5 0.866 0.5 1502.500 140.500)" font-size="15" fill="#c6c6c6">Top</text>
<text transform="matrix(0.866 0.5 0 1 1478 168)" font-size="14" fill="none" stroke="#7c7c7c" stroke-width="1.300" opacity="0.9">Left</text>
<text transform="matrix(0.866 0.5 0 1 1478 168)" font-size="14" fill="#c6c6c6">Left</text>
<text transform="matrix(0.866 -0.5 0 1 1517 179.500)" font-size="13.6" fill="none" stroke="#7c7c7c" stroke-width="1.300" opacity="0.9">Front</text>
<text transform="matrix(0.866 -0.5 0 1 1517 179.500)" font-size="13.6" fill="#c6c6c6">Front</text>
<path d="M1508.500 204.300L1466.500 180.500" stroke="#35c15a" stroke-width="1.600" fill="none"/>
<path d="M1508.500 204.300L1550.800 180.500" stroke="#f06464" stroke-width="1.600" fill="none"/>
<path d="M1508.500 204.300V156" stroke="#74aef2" stroke-width="2" fill="none"/>
<text x="1505.500" y="153" font-size="11" font-weight="bold" font-style="italic" fill="#5a9cf0" textLength="6.500" lengthAdjust="spacingAndGlyphs">Z</text>
<text x="1553.500" y="181" font-size="10.500" font-weight="bold" font-style="italic" fill="#f05a5a" textLength="6.500" lengthAdjust="spacingAndGlyphs">X</text>
<text x="1457.500" y="180.500" font-size="10.500" font-weight="bold" font-style="italic" fill="#2fbe55" textLength="6.500" lengthAdjust="spacingAndGlyphs">Y</text>
</svg>
<div class="abs" style="left:1048px;top:186px;width:59px;height:24px;border:1px solid #555;border-radius:3px;background:#fff"><div class="abs" style="left:6px;top:3px;font-size:13px;line-height:16px;color:#333">Menu</div><div class="abs" style="left:44px;top:9px;border-left:4px solid transparent;border-right:4px solid transparent;border-top:4.500px solid #333"></div></div>
</div><!--E:vw-->
</body>
</html>
